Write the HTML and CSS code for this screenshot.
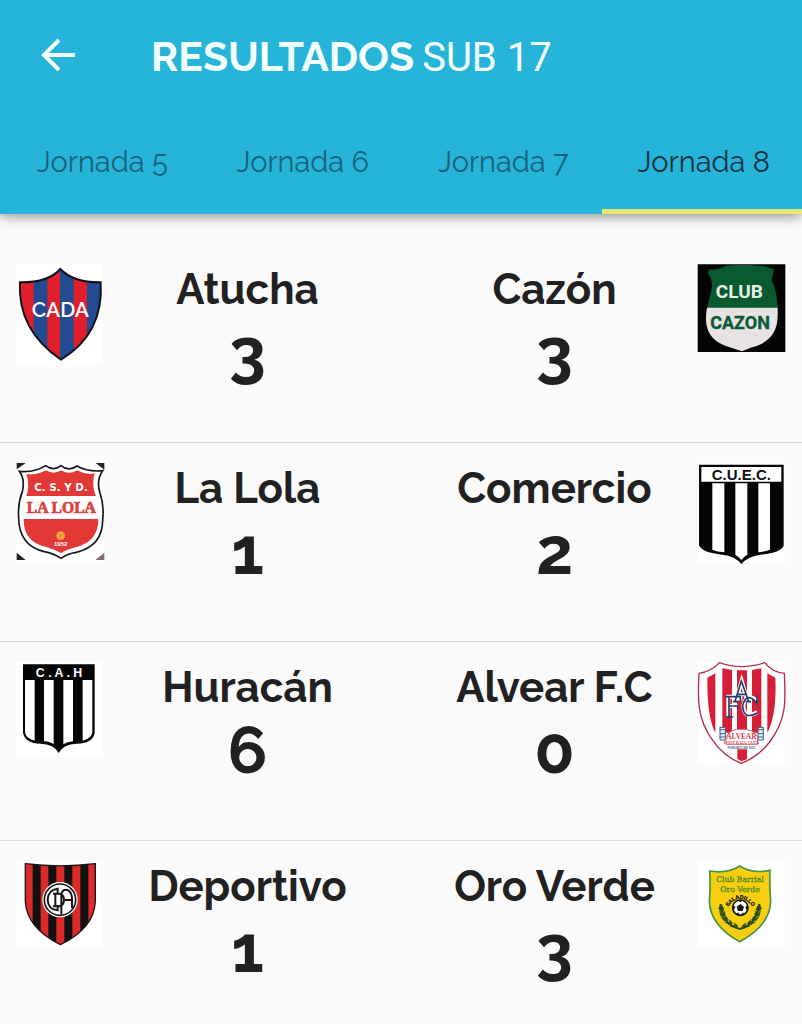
FILE: index.html
```html
<!DOCTYPE html>
<html lang="es">
<head>
<meta charset="utf-8">
<meta name="viewport" content="width=device-width, initial-scale=1">
<title>Resultados Sub 17</title>
<link rel="stylesheet" href="styles.css">
</head>
<body>
<header class="app-bar">
  <div class="toolbar">
    <button class="back" type="button" aria-label="Volver">
      <svg viewBox="0 0 36 36" width="36" height="36" aria-hidden="true"><path d="M35 17H5M19 2L4 17L19 32" fill="none" stroke="#f4ffff" stroke-width="4"/></svg>
    </button>
    <h1 class="title"><strong class="title-main">RESULTADOS</strong><span class="title-sub">SUB 17</span></h1>
  </div>
  <nav class="tabs">
    <a class="tab" href="#j5">Jornada 5</a>
    <a class="tab" href="#j6">Jornada 6</a>
    <a class="tab" href="#j7">Jornada 7</a>
    <a class="tab tab-active" href="#j8" aria-current="page">Jornada 8</a>
  </nav>
</header>
<main>
  <ul class="matches">
    <li class="match">
      <svg class="crest" viewBox="48 42 264 300" aria-hidden="true">
        <defs><clipPath id="cada"><path d="M60 97Q145 98 181 57Q220 98 302 97Q312 250 183 329Q52 240 60 97Z"/></clipPath></defs>
        <path d="M48 42h260v300H48z" fill="#fff"/>
        <g clip-path="url(#cada)"><path d="M50 50h260v290H50z" fill="#e01f2d"/><path d="M101 50h41v290h-41zM180 50h41v290h-41zM261 50h50v290h-50z" fill="#214a91"/></g>
        <path d="M60 97Q145 98 181 57Q220 98 302 97Q312 250 183 329Q52 240 60 97Z" fill="none" stroke="#10101c" stroke-width="6"/>
        <text class="raleway" x="181" y="202" font-size="63" fill="#fff">CADA</text>
      </svg>
      <div class="teams">
        <div class="team"><span class="name">Atucha</span><span class="score">3</span></div>
        <div class="team"><span class="name">Cazón</span><span class="score">3</span></div>
      </div>
      <svg class="crest" viewBox="39 42 264 300" aria-hidden="true">
        <defs><clipPath id="cazon"><path d="M73 58Q100 60 122 47L177 44L237 48L267 58L260 90Q280 132 278 193C279 250 250 279 201 292L171 304L139 293C86 280 62 250 63 203C63 165 81 130 81 105Q79 80 68 70Z"/></clipPath></defs>
        <path d="M38 43h263v263H38z" fill="#050505"/>
        <g clip-path="url(#cazon)"><path d="M40 42h260v134H40z" fill="#0a5a30"/><path d="M40 173h260v135H40z" fill="#e7e3e3"/></g>
        <text class="roboto bold" x="163" y="145" font-size="57" fill="#e7f0e7">CLUB</text>
        <text class="roboto bold" x="165" y="237" font-size="54" fill="#0a5a37" stroke="#0a5a37">CAZON</text>
      </svg>
    </li>
    <li class="match">
      <svg class="crest" viewBox="48 39 264 300" aria-hidden="true">
        <defs><clipPath id="lola"><path d="M79 72Q110 77 138 61Q162 75 183 61Q207 76 231 61Q258 76 284 70Q276 95 283 125Q296 155 295 200C298 257 265 282 230 291Q200 298 183 309Q164 298 136 290C92 280 68 250 71 200Q70 157 82 128Q88 100 79 72Z"/></clipPath></defs>
        <path d="M48 39h264v300H48z" fill="#fff"/>
        <path d="M50 39h27L50 58zM287 39h26v20zM50 308l27 22H50z" fill="#222"/><path d="M313 308v22h-27z" fill="#806e70"/>
        <path d="M58 64Q105 68 137 47Q161 65 183 47Q206 66 231 48Q265 67 308 62Q288 90 300 130Q313 165 308 210C308 270 270 297 229 307Q202 311 183 325Q160 310 133 305C82 293 57 260 56 205Q53 160 67 125Q76 88 58 64Z" fill="#fff" stroke="#17171b" stroke-width="5"/>
        <g clip-path="url(#lola)"><path d="M50 50h270v88H50zM50 207h270v110H50z" fill="#e23936"/></g>
        <text class="wide bold" x="183" y="122" font-size="31" fill="#fff">C. S. Y D.</text>
        <text class="serif bold" x="184" y="190" font-size="47" fill="#dc3e3e" stroke="#dc3e3e" stroke-width="2">LA LOLA</text>
        <circle cx="182" cy="257" r="13" fill="#f5a43a"/><path d="M173 249l9 7 9-6M182 256v12" fill="none" stroke="#d8792e" stroke-width="2"/>
        <text class="sans bold" x="182" y="289" font-size="18" fill="#fff">1952</text>
      </svg>
      <div class="teams">
        <div class="team"><span class="name">La Lola</span><span class="score">1</span></div>
        <div class="team"><span class="name">Comercio</span><span class="score">2</span></div>
      </div>
      <svg class="crest" viewBox="39 39 264 300" aria-hidden="true">
        <path d="M39 39h260v300H39z" fill="#fff"/>
        <path d="M42 44H296V288Q286 309 226 314Q188 319 169 342Q150 318 112 314Q53 309 42 286Z" fill="#050505"/>
        <path d="M49 51h240v44H49zM82 100h36v207q-22-2-36-8zM151 100h36v214q-12 7-18 16q-6-9-18-16zM220 100h35v199q-17 6-35 8z" fill="#fff"/>
        <text class="sans bold" x="169" y="89" font-size="45" fill="#111">C.U.E.C.</text>
      </svg>
    </li>
    <li class="match">
      <svg class="crest" viewBox="48 36 264 300" aria-hidden="true">
        <path d="M48 36h260v284H48z" fill="#fff"/>
        <path d="M69 43H284V248Q280 280 229 281Q190 282 176 309Q162 282 122 281Q75 280 69 248Z" fill="#050505"/>
        <path d="M75 90h29v182Q77 266 75 246zM132 90h29v193q-10-8-29-9zM190 90h29v184q-18 1-29 9zM248 90h29v156q-2 20-29 26z" fill="#fff"/>
        <text class="sans bold" x="177" y="82" font-size="37" fill="#fff">C . A . H</text>
      </svg>
      <div class="teams">
        <div class="team"><span class="name">Huracán</span><span class="score">6</span></div>
        <div class="team"><span class="name">Alvear F.C</span><span class="score">0</span></div>
      </div>
      <svg class="crest" viewBox="39 36 264 300" aria-hidden="true">
        <path d="M39 36h260v306H39z" fill="#fff"/>
        <path d="M42 70Q80 65 103 38Q170 62 239 38Q262 67 298 70C302 150 306 207 254 276Q220 320 169 340Q116 320 81 268C36 205 38 145 42 70Z" fill="#fff" stroke="#b52d46" stroke-width="4"/>
        <path d="M67 83l24-13v178q-25-45-24-165zM112 55l29 5v188h-29zM156 61h30v190h-30zM201 60l28-5v193h-28zM247 70l24 13q5 110-24 166zM157 298h29v29l-16 7-13-7z" fill="#d51e37"/>
        <g fill="none" stroke="#fff" stroke-width="12"><path d="M153 152L170 93L187 152M160 133h21M130 140v60M124 140h42v12M130 168h27M216 151q-32-25-41 15q2 45 42 20"/></g>
        <g fill="none" stroke="#243d70" stroke-width="5"><path d="M150 154L169 93L191 154M144 155h15M182 155h16M158 133h25M132 140v60M122 140h44v13M132 168h26v8M122 201h23M216 139v21q-30-37-43 5q1 48 45 23"/></g>
        <path d="M105 232h16v38h-16zM219 232h16v38h-16z" fill="#e8eff5" stroke="#3b5f82" stroke-width="3"/>
        <path d="M103 239h20M105 251h16M105 261h16M217 239h20M219 251h16M219 261h16" stroke="#3b5f82" stroke-width="3"/>
        <path d="M123 283V261Q137 235 170 238Q203 235 218 261V283Z" fill="#fff" stroke="#d8616b" stroke-width="3"/>
        <text class="serif bold" x="169" y="266" font-size="22" fill="#d33c4d">ALVEAR</text>
        <text class="serif bold" x="169" y="281" font-size="12" fill="#d33c4d">FOOT BALL CLUB</text>
        <text class="sans bold" x="169" y="296" font-size="9" fill="#45658b">FUNDADO EN 1923</text>
      </svg>
    </li>
    <li class="match">
      <svg class="crest" viewBox="48 33 264 300" aria-hidden="true">
        <defs><clipPath id="depo"><path d="M76 41Q180 54 286 41V155Q282 235 181 284Q80 233 76 155Z"/></clipPath></defs>
        <path d="M48 33h260v260H48z" fill="#fff"/>
        <g clip-path="url(#depo)"><path d="M70 35h220v255H70z" fill="#da2a2a"/><path d="M98 35h24v255H98zM145 35h24v255h-24zM193 35h24v255h-24zM241 35h24v255h-24z" fill="#111"/></g>
        <path d="M76 41Q180 54 286 41V155Q282 235 181 284Q80 233 76 155Z" fill="none" stroke="#211417" stroke-width="4"/>
        <circle cx="180" cy="149" r="53" fill="#fff"/><circle cx="180" cy="149" r="47" fill="none" stroke="#171719" stroke-width="5"/>
        <path d="M173 132V116Q144 120 143 149Q144 178 173 181V165M166 131V169M159 131H178Q192 133 192 150Q191 167 178 169H159M184 193V133Q188 117 202 120Q216 125 216 147V174M192 150H216" fill="none" stroke="#171719" stroke-width="6"/>
      </svg>
      <div class="teams">
        <div class="team"><span class="name">Deportivo</span><span class="score">1</span></div>
        <div class="team"><span class="name">Oro Verde</span><span class="score">3</span></div>
      </div>
      <svg class="crest" viewBox="39 33 264 300" aria-hidden="true">
        <path d="M39 33h260v260H39z" fill="#fff"/>
        <path d="M74 63Q128 72 164 48Q201 72 255 61Q253 100 257 155Q254 227 164 275Q77 228 73 155Q77 110 74 63Z" fill="#f8cf10" stroke="#459543" stroke-width="5"/>
        <text class="slab" x="165" y="97" font-size="23" fill="#538d23" stroke="#538d23">Club Barrial</text>
        <text class="slab" x="165" y="127" font-size="23" fill="#538d23" stroke="#538d23">Oro Verde</text>
        <path id="arc" d="M130 169Q165 123 202 169" fill="none"/>
        <text class="sans bold" font-size="16" fill="#181b12" stroke="#181b12"><textPath href="#arc" startOffset="50%">SALADILLO</textPath></text>
        <circle cx="166" cy="173" r="23" fill="#fff" stroke="#151b19" stroke-width="5"/>
        <path d="M166 162l11 8-4 13h-14l-4-13zM157 150h18l-9 7zM143 165l8 5-5 13zM189 165l-8 5 5 13zM154 195l3-8 10 8zM178 195l-3-8-8 8z" fill="#151b19"/>
        <path d="M107 162Q113 224 164 237Q215 224 223 162" fill="none" stroke="#264d20" stroke-width="6"/>
        <g fill="#264d20" stroke="#264d20" stroke-width="2">
          <path d="M106 163l-5 14 8 6zM110 166l7 11-6 8zM104 182l3 15 9 2zM117 182l4 12-6 5zM108 200l9 12 7-2zM122 197l7 11-5 5zM119 216l14 8 4-5zM132 209l10 9-3 6zM135 228l16 4 1-7zM147 219l11 8-1 7z"/>
          <path d="M224 163l5 14-8 6zM220 166l-7 11 6 8zM226 182l-3 15-9 2zM213 182l-4 12 6 5zM222 200l-9 12-7-2zM208 197l-7 11 5 5zM211 216l-14 8-4-5zM198 209l-10 9 3 6zM195 228l-16 4-1-7zM183 219l-11 8 1 7z"/>
        </g>
      </svg>
    </li>
  </ul>
</main>
</body>
</html>
```
FILE: styles.css
```css
* { box-sizing: border-box; }
body {
  margin: 0;
  background: #fbfafb;
  color: #212121;
  font-family: Raleway, Lato, "Open Sans", sans-serif;
}
.app-bar {
  position: relative;
  background: #26b4d8;
  box-shadow: 0 2px 12px rgba(0, 0, 0, 0.45);
}
.toolbar {
  display: flex;
  align-items: center;
  height: 112px;
  padding: 0 40px;
  gap: 75px;
}
.back {
  display: flex;
  padding: 0;
  border: 0;
  background: none;
}
.title {
  display: flex;
  align-items: baseline;
  gap: 8px;
  margin: 0;
  color: #f4ffff;
  font-weight: 400;
}
.title-main { font-size: 41px; font-weight: 700; }
.title-sub { font-family: Roboto, sans-serif; font-size: 40px; }
.tabs { display: grid; grid-template-columns: repeat(4, 1fr); }
.tab {
  height: 102px;
  padding: 32px 0 0 4px;
  border-bottom: 5px solid transparent;
  color: #18617a;
  font-size: 29px;
  line-height: 36px;
  text-align: center;
  text-decoration: none;
}
.tab-active { color: #14323f; border-color: #e9e577; }
.matches { margin: 0; padding: 30px 0 0; list-style: none; }
.match {
  display: flex;
  align-items: flex-start;
  height: 199px;
  padding: 20px 16px 0;
  border-bottom: 1px solid #dadada;
}
.match:last-child { border-bottom: 0; height: 180px; }
.crest { flex: none; width: 88px; height: 100px; overflow: visible; }
.crest text { text-anchor: middle; }
.sans { font-family: "Liberation Sans", sans-serif; }
.serif { font-family: "Liberation Serif", serif; }
.slab { font-family: "DejaVu Serif", serif; }
.wide { font-family: "DejaVu Sans", sans-serif; }
.roboto { font-family: Roboto, sans-serif; }
.raleway { font-family: Raleway, Lato, sans-serif; font-weight: 600; }
.bold { font-weight: 700; }
.teams { flex: 1; display: grid; grid-template-columns: 1fr 1fr; gap: 20px; }
.team { display: flex; flex-direction: column; align-items: center; }
.name { font-size: 42px; line-height: 52px; font-weight: 700; white-space: nowrap; }
.score {
  font-size: 66px;
  line-height: 72px;
  font-weight: 700;
  font-variant-numeric: oldstyle-nums;
}
```
